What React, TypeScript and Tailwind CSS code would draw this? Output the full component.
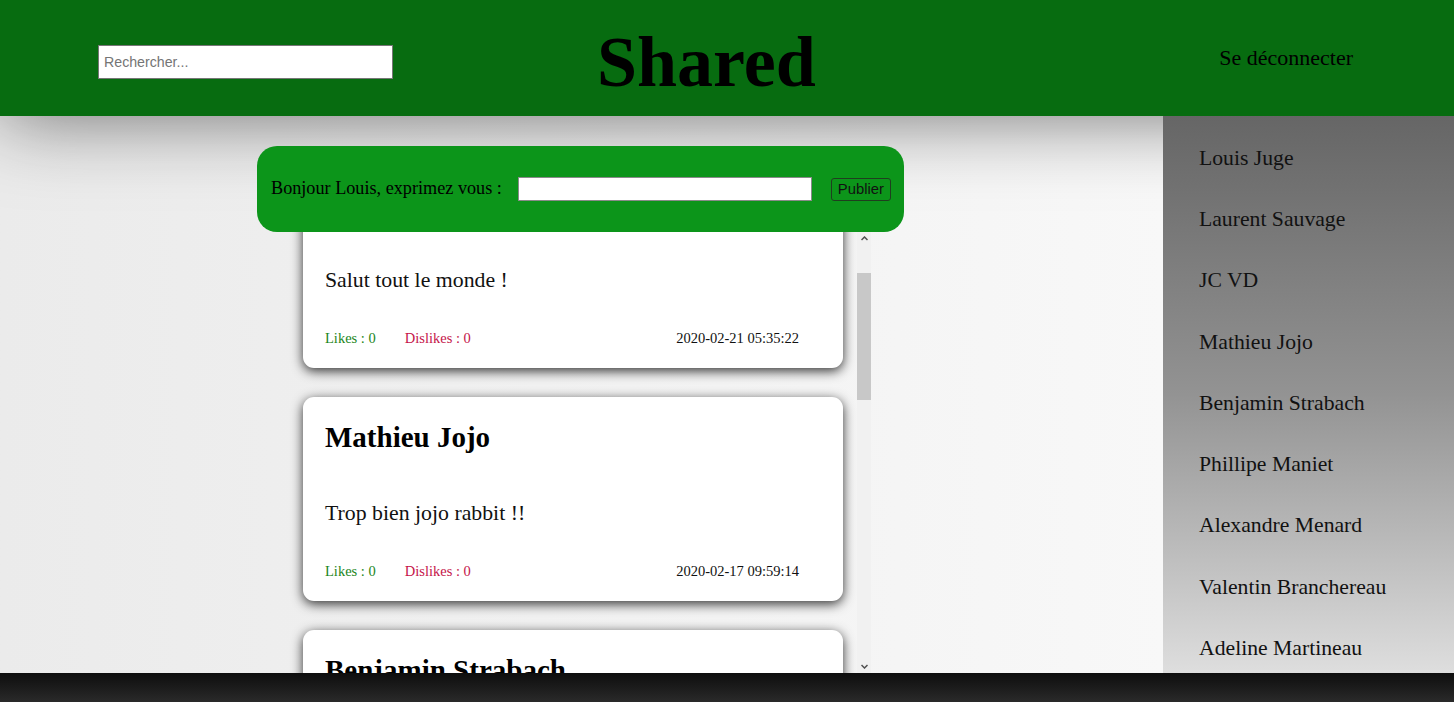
const users = [
  "Louis Juge",
  "Laurent Sauvage",
  "JC VD",
  "Mathieu Jojo",
  "Benjamin Strabach",
  "Phillipe Maniet",
  "Alexandre Menard",
  "Valentin Branchereau",
  "Adeline Martineau",
];

const posts = [
  { author: "Louis Juge", text: "Salut tout le monde !", likes: 0, dislikes: 0, date: "2020-02-21 05:35:22" },
  { author: "Mathieu Jojo", text: "Trop bien jojo rabbit !!", likes: 0, dislikes: 0, date: "2020-02-17 09:59:14" },
  { author: "Benjamin Strabach", text: "Bonjour à tous", likes: 0, dislikes: 0, date: "2020-02-16 18:12:40" },
];

const serif = "font-['Liberation_Serif',serif]";
const sans = "font-['Liberation_Sans',Arial,sans-serif]";

const PostCard = ({ post }: { post: (typeof posts)[number] }) => (
  <div className="w-[540px] shrink-0 rounded-[11px] bg-white pl-[22px] pt-[23px] pb-[21px] shadow-[0_3px_12px_rgba(0,0,0,0.8)]">
    <h2 className="text-[29px] font-bold leading-[34px] text-black">{post.author}</h2>
    <p className="mt-[46px] text-[21.8px] leading-[26px] text-[#111]">{post.text}</p>
    <div className="mt-[36px] flex items-center pr-[44px] text-[14.5px] leading-[18px]">
      <span className="text-[#1b861b]">Likes : {post.likes}</span>
      <span className="ml-[29px] text-[#c5144a]">Dislikes : {post.dislikes}</span>
      <span className="ml-auto text-[#111]">{post.date}</span>
    </div>
  </div>
);

const Scrollbar = () => (
  <div className="relative h-full w-[14px] shrink-0 bg-[#f1f1f1]">
    <svg className="absolute left-[4px] top-[4px]" width="7" height="5" viewBox="0 0 7 5">
      <polyline points="0.5,4 3.5,1 6.5,4" fill="none" stroke="#505050" strokeWidth="1.5" />
    </svg>
    <div className="absolute left-0 top-[41px] h-[127px] w-full bg-[#c8c8c8]" />
    <svg className="absolute bottom-[4px] left-[4px]" width="7" height="5" viewBox="0 0 7 5">
      <polyline points="0.5,1 3.5,4 6.5,1" fill="none" stroke="#505050" strokeWidth="1.5" />
    </svg>
  </div>
);

export default function App() {
  return (
    <div className={`flex h-[702px] w-[1454px] flex-col overflow-hidden ${serif}`}>
      <header className="relative z-10 flex h-[116px] shrink-0 items-center bg-[#076c10] shadow-[0_0_80px_rgba(0,0,0,0.55)]">
        <input
          type="text"
          placeholder="Rechercher..."
          className={`ml-[98px] mt-[8px] h-[34px] w-[295px] border border-[#767676] bg-white px-[5px] text-[14.2px] text-black placeholder:text-[#757575] outline-none ${sans}`}
        />
        <h1 className="ml-[204px] mt-[8px] text-[72px] font-bold leading-none text-black">Shared</h1>
        <button className="ml-auto mr-[101px] mb-[2px] text-[22px] text-black">Se déconnecter</button>
      </header>

      <div className="flex min-h-0 flex-1">
        <main className="flex-1 bg-gradient-to-r from-[#ebebeb] to-[#f8f8f8]">
          <div className="ml-[257px] w-[647px] pt-[30px]">
            <div className="relative z-20 flex h-[86px] items-center rounded-[20px] bg-[#0c951a] pl-[14px]">
              <span className="text-[18.2px] text-black">Bonjour Louis, exprimez vous :</span>
              <input
                type="text"
                className={`ml-[16px] h-[24px] w-[294px] border border-[#8a8a8a] bg-white px-1 text-[14px] outline-none ${sans}`}
              />
              <button
                className={`ml-[19px] h-[23px] rounded-[3px] border border-[#1f3f1f] px-[6px] text-[14.8px] leading-none text-[#111] ${sans}`}
              >
                Publier
              </button>
            </div>
            <div className="ml-[28px] flex h-[441px] w-[586px] overflow-hidden">
              <div className="w-[572px] overflow-hidden">
                <div className="mt-[-68px] flex flex-col gap-[29px] pl-[18px]">
                  {posts.map((p) => (
                    <PostCard key={p.date} post={p} />
                  ))}
                </div>
              </div>
              <Scrollbar />
            </div>
          </div>
        </main>

        <aside className="relative z-20 w-[291px] shrink-0 bg-gradient-to-b from-[#666666] via-[#939393] to-[#dedede] pl-[36px] pt-[11.5px]">
          <ul>
            {users.map((u) => (
              <li key={u} className="flex h-[61.25px] items-center text-[21.7px] text-[#111]">
                {u}
              </li>
            ))}
          </ul>
        </aside>
      </div>

      <footer className="h-[29px] shrink-0 bg-gradient-to-b from-[#0e0e0e] to-[#2a2a2a]" />
    </div>
  );
}
